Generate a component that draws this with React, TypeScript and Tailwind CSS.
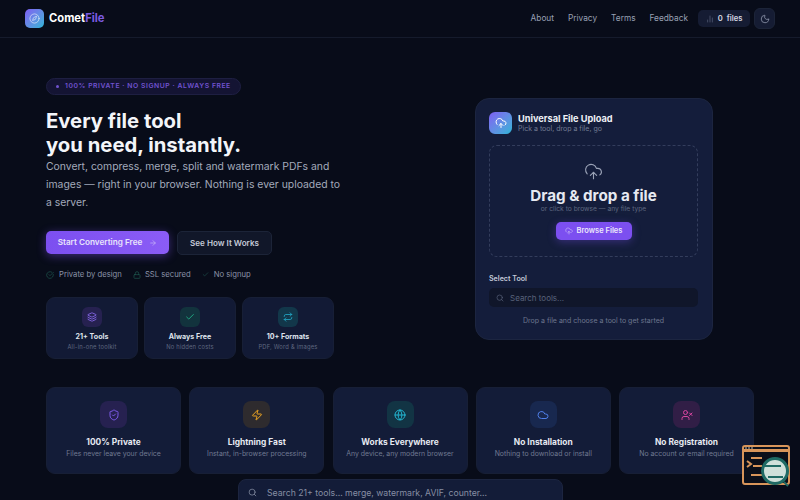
import { ArrowRight, BarChart2, Check, CheckCircle, Cloud, CloudUpload, Compass, Globe, Layers, Lock, Moon, Repeat, Search, ShieldCheck, UserX, Zap } from 'lucide-react'

const stats = [
  { icon: Layers, title: '21+ Tools', sub: 'All-in-one toolkit', box: 'bg-[#262150]', color: 'text-[#8b6cf0]' },
  { icon: Check, title: 'Always Free', sub: 'No hidden costs', box: 'bg-[#12333d]', color: 'text-[#22b98c]' },
  { icon: Repeat, title: '10+ Formats', sub: 'PDF, Word & images', box: 'bg-[#12374a]', color: 'text-[#22a6c4]' },
]

const features = [
  { icon: ShieldCheck, title: '100% Private', sub: 'Files never leave your device', box: 'bg-[#262150]', color: 'text-[#7c5be8]' },
  { icon: Zap, title: 'Lightning Fast', sub: 'Instant, in-browser processing', box: 'bg-[#2e2b2e]', color: 'text-[#eda523]' },
  { icon: Globe, title: 'Works Everywhere', sub: 'Any device, any modern browser', box: 'bg-[#123444]', color: 'text-[#22b4cf]' },
  { icon: Cloud, title: 'No Installation', sub: 'Nothing to download or install', box: 'bg-[#18284f]', color: 'text-[#4f7fe8]' },
  { icon: UserX, title: 'No Registration', sub: 'No account or email required', box: 'bg-[#311e46]', color: 'text-[#d946a0]' },
]

function DevWidget() {
  return (
    <div className="absolute left-[742px] top-[445px] w-[48px] h-[43px]">
      <svg width="48" height="43" viewBox="0 0 48 43" fill="none">
        <rect x="1" y="1" width="46" height="38" rx="2" fill="#0b0f1a" stroke="#d8955a" strokeWidth="2" />
        <rect x="2" y="4" width="44" height="3" fill="#d8955a" />
        <path d="M3 3h2M6 3h2M9 3h2" stroke="#c9c4b8" strokeWidth="1" />
        <path d="M5 16l4 3-4 3" stroke="#d8955a" strokeWidth="2" />
        <path d="M9 13h11M11 21h9M9 30h14" stroke="#d8955a" strokeWidth="2" />
        <circle cx="33" cy="26" r="12.5" fill="#cfe0da" stroke="#1f6a64" strokeWidth="3" />
        <path d="M22 21h17M26 32h15" stroke="#1f6a64" strokeWidth="2" />
        <path d="M42 37l4 4" stroke="#1f6a64" strokeWidth="2" />
      </svg>
    </div>
  )
}

export default function App() {
  return (
    <div className="relative h-[500px] w-[800px] overflow-hidden bg-[#080c19] font-['Inter','Liberation_Sans',sans-serif] text-white">
      {/* Header */}
      <header className="flex h-[38px] items-center border-b border-[#151b2c] px-[25px]">
        <div className="flex h-[19px] w-[19px] items-center justify-center rounded-[5px] bg-gradient-to-br from-[#7c5cf2] to-[#22b4d6]">
          <Compass className="h-[11px] w-[11px] text-white/60" />
        </div>
        <span className="ml-[5px] text-[11.2px] font-bold">
          Comet<span className="text-[#7c5be0]">File</span>
        </span>
        <nav className="ml-auto flex items-center gap-[14px] text-[8.3px] text-[#98a0b4]">
          <span>About</span>
          <span>Privacy</span>
          <span>Terms</span>
          <span>Feedback</span>
        </nav>
        <div className="ml-[10px] flex h-[17px] w-[52px] items-center justify-center gap-[4px] rounded-[5px] bg-[#151c33] text-[7.6px] font-semibold text-[#d5d9e4]">
          <BarChart2 className="h-[8px] w-[8px] text-[#5d6680]" />
          <span>0</span>
          <span>files</span>
        </div>
        <div className="ml-[4px] flex h-[21px] w-[21px] items-center justify-center rounded-[6px] border border-[#1c2438] bg-[#151c33]">
          <Moon className="h-[10px] w-[10px] text-[#8b93a8]" />
        </div>
      </header>

      <main className="pl-[46px]">
        {/* Hero */}
        <section className="flex h-[349px]">
          <div className="w-[429px] pt-[40px]">
            <div className="flex h-[17px] w-[195px] items-center gap-[6px] whitespace-nowrap rounded-full border border-[#1e1f42] bg-[#141433] pl-[9px] text-[6.8px] font-semibold tracking-[0.55px] text-[#7052cf]">
              <span className="h-[3px] w-[3px] rounded-full bg-[#7052cf]" />
              100% PRIVATE · NO SIGNUP · ALWAYS FREE
            </div>
            <h1 className="mt-[14px] text-[20.3px] font-bold leading-[24px] text-[#f3f5f9]">
              Every file tool
              <br />
              you need, instantly.
            </h1>
            <p className="mt-[1px] w-[300px] text-[10.4px] leading-[18px] text-[#a3aabb]">
              Convert, compress, merge, split and watermark PDFs and images — right in your browser. Nothing is ever uploaded to a server.
            </p>
            <div className="mt-[19px] flex gap-[8px]">
              <div className="flex h-[23px] w-[123px] items-center justify-center gap-[7px] rounded-[5px] bg-gradient-to-r from-[#7c4ff0] to-[#8b5cf6] text-[8.2px] font-semibold text-[#e8e4fb] shadow-[0_2px_10px_rgba(124,79,240,0.45)]">
                Start Converting Free
                <ArrowRight className="h-[8px] w-[8px] text-[#c9b8f8]" />
              </div>
              <div className="flex h-[24px] w-[95px] items-center justify-center rounded-[5px] border border-[#1c2438] bg-[#111729] text-[8.1px] font-semibold text-[#c5cad8]">
                See How It Works
              </div>
            </div>
            <div className="mt-[14px] flex items-center text-[7.7px] leading-[11px] text-[#8a92a7]">
              <CheckCircle className="h-[8px] w-[8px] text-[#1f5a52]" />
              <span className="ml-[5px]">Private by design</span>
              <Lock className="ml-[11px] h-[8px] w-[8px] text-[#1f5a52]" />
              <span className="ml-[4px]">SSL secured</span>
              <Check className="ml-[11px] h-[7px] w-[7px] text-[#1f5a52]" />
              <span className="ml-[5px]">No signup</span>
            </div>
            <div className="mt-[17px] flex gap-[6px]">
              {stats.map((s) => (
                <div key={s.title} className="flex h-[62px] w-[92px] flex-col items-center rounded-[9px] border border-[#171f36] bg-[#121a35] pt-[9px]">
                  <div className={`flex h-[20px] w-[20px] items-center justify-center rounded-[6px] ${s.box}`}>
                    <s.icon className={`h-[10px] w-[10px] ${s.color}`} />
                  </div>
                  <div className="mt-[4px] text-[7.1px] font-bold leading-[11px] text-[#dfe3ec]">{s.title}</div>
                  <div className="text-[5.8px] leading-[9px] tracking-[0.2px] text-[#5f6880]">{s.sub}</div>
                </div>
              ))}
            </div>
          </div>

          {/* Upload card */}
          <div className="mt-[60px] h-[242px] w-[238px] rounded-[14px] border border-[#1c2540] bg-[#141d3b] pl-[13px] pr-[14px] pt-[13px]">
            <div className="flex items-center gap-[6px]">
              <div className="flex h-[22px] w-[23px] items-center justify-center rounded-[6px] bg-gradient-to-br from-[#7c5cf2] to-[#22b4d6]">
                <CloudUpload className="h-[12px] w-[12px] text-white" />
              </div>
              <div>
                <div className="text-[9.2px] font-bold leading-[11px] text-[#eef0f6]">Universal File Upload</div>
                <div className="text-[7px] leading-[10px] text-[#737c93]">Pick a tool, drop a file, go</div>
              </div>
            </div>
            <div className="mt-[11px] flex h-[112px] flex-col items-center rounded-[8px] border border-dashed border-[#333d5c] pt-[16px]">
              <CloudUpload className="h-[19px] w-[19px] text-[#9aa2b6]" strokeWidth={1.4} />
              <div className="mt-[5px] text-[15.2px] font-bold leading-[19px] text-[#e6e9f1]">Drag &amp; drop a file</div>
              <div className="text-[6.7px] leading-[8px] text-[#5f6880]">or click to browse — any file type</div>
              <div className="mt-[9px] flex h-[18px] w-[76px] items-center justify-center gap-[4px] rounded-[5px] bg-[#7c4ff0] text-[7.5px] font-semibold text-[#ece8fb] shadow-[0_2px_8px_rgba(124,79,240,0.35)]">
                <CloudUpload className="h-[8px] w-[8px] text-[#c9b8f8]" />
                Browse Files
              </div>
            </div>
            <div className="mt-[16px] text-[7.1px] font-semibold leading-[11px] text-[#c3c9d8]">Select Tool</div>
            <div className="mt-[4px] flex h-[19px] items-center gap-[6px] rounded-[5px] bg-[#10162a] pl-[7px] text-[8px] text-[#59627a]">
              <Search className="h-[8px] w-[8px]" />
              <span>Search tools...</span>
            </div>
            <div className="mt-[9px] text-center text-[7px] leading-[10px] text-[#6d768e]">Drop a file and choose a tool to get started</div>
          </div>
        </section>

        {/* Features */}
        <section className="flex gap-[8.25px]">
          {features.map((f) => (
            <div key={f.title} className="flex h-[87px] w-[135px] flex-col items-center rounded-[9px] border border-[#171f36] bg-[#131c38] pt-[13px]">
              <div className={`flex h-[27px] w-[27px] items-center justify-center rounded-[8px] ${f.box}`}>
                <f.icon className={`h-[12px] w-[12px] ${f.color}`} />
              </div>
              <div className="mt-[8px] text-[8.4px] font-bold leading-[13px] text-[#e6e9f1]">{f.title}</div>
              <div className="text-[6.9px] leading-[10px] text-[#717a92]">{f.sub}</div>
            </div>
          ))}
        </section>

        {/* Search */}
        <div className="ml-[192px] mt-[5px] flex h-[40px] w-[325px] items-start gap-[10px] rounded-[8px] border border-[#1c2540] bg-[#131c38] pl-[9px] pt-[7px] text-[8.7px] text-[#868ea3]">
          <Search className="mt-[1px] h-[9px] w-[9px]" />
          <span>Search 21+ tools... merge, watermark, AVIF, counter...</span>
        </div>
      </main>

      <DevWidget />
    </div>
  )
}
